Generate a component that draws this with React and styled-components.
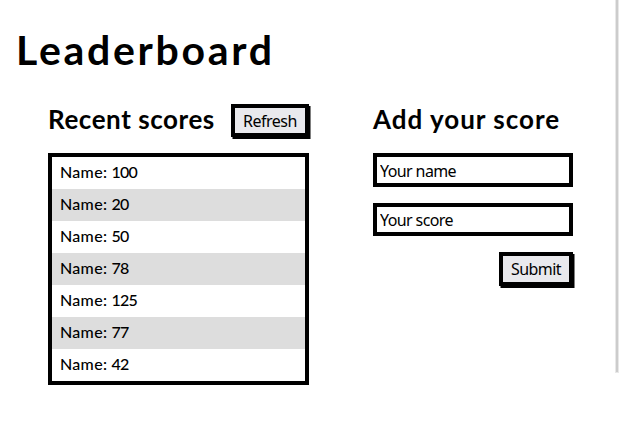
import React from "react";
import styled, { createGlobalStyle } from "styled-components";

const GlobalStyle = createGlobalStyle`
  * { box-sizing: border-box; }
  body { margin: 0; background: #fff; color: #000; overflow: hidden; }
`;

const Page = styled.main`
  display: flex;
  justify-content: space-between;
  width: 620px;
  height: 435px;
  padding-right: 1px;
  font-family: Lato, sans-serif;
`;

const Content = styled.div`
  width: 573px;
`;

const Title = styled.h1`
  margin: 0;
  padding: 25px 0 0 16px;
  height: 100px;
  font-size: 41px;
  font-weight: 700;
  line-height: 49px;
  letter-spacing: 2.7px;
`;

const Columns = styled.div`
  display: grid;
  grid-template-columns: 261px 200px;
  column-gap: 64px;
  padding-left: 48px;
`;

const Header = styled.header`
  display: flex;
  justify-content: space-between;
  height: 53px;
  padding-top: 4px;
`;

const Heading = styled.h2`
  margin: 0;
  font-size: 26px;
  font-weight: 700;
  line-height: 31px;
  white-space: nowrap;
  letter-spacing: ${(p) => p.$spacing};
`;

const Button = styled.button`
  width: ${(p) => p.$width};
  height: ${(p) => p.$height};
  padding: ${(p) => p.$padding};
  border: 4px solid #000;
  border-radius: 0;
  background: #e9e9ed;
  color: #000;
  box-shadow: 1.5px 2px 0 #000;
  font: 16px/24px "Noto Sans", sans-serif;
  letter-spacing: ${(p) => p.$spacing};
`;

const Scores = styled.ul`
  margin: 0;
  padding: 0;
  border: 4px solid #000;
  list-style: none;
`;

const Score = styled.li`
  height: 32px;
  padding-left: 8px;
  font-size: 16px;
  font-weight: 500;
  line-height: 30px;
  letter-spacing: 0.3px;
  &:nth-child(even) { background: #ddd; }
`;

const Value = styled.span`
  letter-spacing: -0.8px;
`;

const Form = styled.form`
  display: flex;
  flex-direction: column;
  gap: 16px;
`;

const Field = styled.input`
  height: ${(p) => p.$height};
  width: 100%;
  padding: 1px 3px 0;
  border: 4px solid #000;
  border-radius: 0;
  background: #fff;
  font: 16px "Noto Sans", sans-serif;
  letter-spacing: -0.6px;
  &::placeholder { color: #000; opacity: 1; }
`;

const Actions = styled.div`
  display: flex;
  justify-content: flex-end;
`;

const Scrollbar = styled.div`
  width: 4px;
  height: 373px;
  border: solid #e8e8e8;
  border-width: 0 1px 1px;
  background: #ccc;
`;

const scores = [100, 20, 50, 78, 125, 77, 42];

export default function App() {
  return (
    <Page>
      <GlobalStyle />
      <Content>
        <Title>Leaderboard</Title>
        <Columns>
          <section>
            <Header>
              <Heading $spacing="0.55px">Recent scores</Heading>
              <Button $width="78px" $height="33px" $padding="1px 0 0" $spacing="-0.5px">Refresh</Button>
            </Header>
            <Scores>
              {scores.map((score) => (
                <Score key={score}>Name: <Value>{score}</Value></Score>
              ))}
            </Scores>
          </section>
          <section>
            <Header>
              <Heading $spacing="1px">Add your score</Heading>
            </Header>
            <Form>
              <Field $height="34px" placeholder="Your name" />
              <Field $height="33px" placeholder="Your score" />
              <Actions>
                <Button type="button" $width="74px" $height="34px" $padding="0 0 1px" $spacing="-0.6px">Submit</Button>
              </Actions>
            </Form>
          </section>
        </Columns>
      </Content>
      <Scrollbar />
    </Page>
  );
}
